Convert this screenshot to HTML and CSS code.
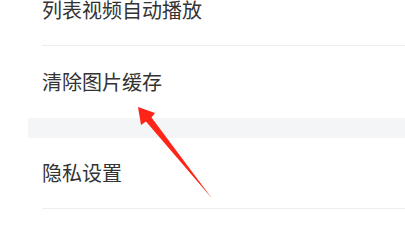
FILE: index.html
```html
<!DOCTYPE html>
<html lang="zh-CN">
<head>
<meta charset="utf-8">
<link rel="stylesheet" href="styles.css">
</head>
<body>
<div class="page">
  <div class="group">
    <div class="row row-first"><span class="label">列表视频自动播放</span></div>
    <div class="row row-plain"><span class="label">清除图片缓存</span></div>
  </div>
  <div class="gap"></div>
  <div class="group">
    <div class="row"><span class="label">隐私设置</span></div>
  </div>
  <svg class="arrow" width="405" height="229" viewBox="0 0 405 229">
    <polygon points="138,107 155,113 151.5,117.5 212,198.5 146,121.5 141,125" fill="#ff2418"/>
  </svg>
</div>
</body>
</html>
```
FILE: styles.css
```css
html, body {
  margin: 0;
  padding: 0;
  background: #ffffff;
}
.page {
  position: relative;
  width: 405px;
  height: 229px;
  overflow: hidden;
  font-family: "Noto Sans CJK SC", "Noto Sans", sans-serif;
}
.group {
  display: flex;
  flex-direction: column;
}
.row {
  margin-left: 42px;
  height: 70px;
  border-bottom: 1px solid #eeeeee;
  display: flex;
  align-items: center;
}
.row-first {
  margin-top: -25px;
}
.row-plain {
  height: 72px;
  border-bottom: none;
}
.label {
  font-size: 20px;
  line-height: 1;
  color: #333333;
}
.gap {
  margin-left: 28px;
  height: 20px;
  background: #f4f5f7;
}
.arrow {
  position: absolute;
  left: 0;
  top: 0;
}
```
